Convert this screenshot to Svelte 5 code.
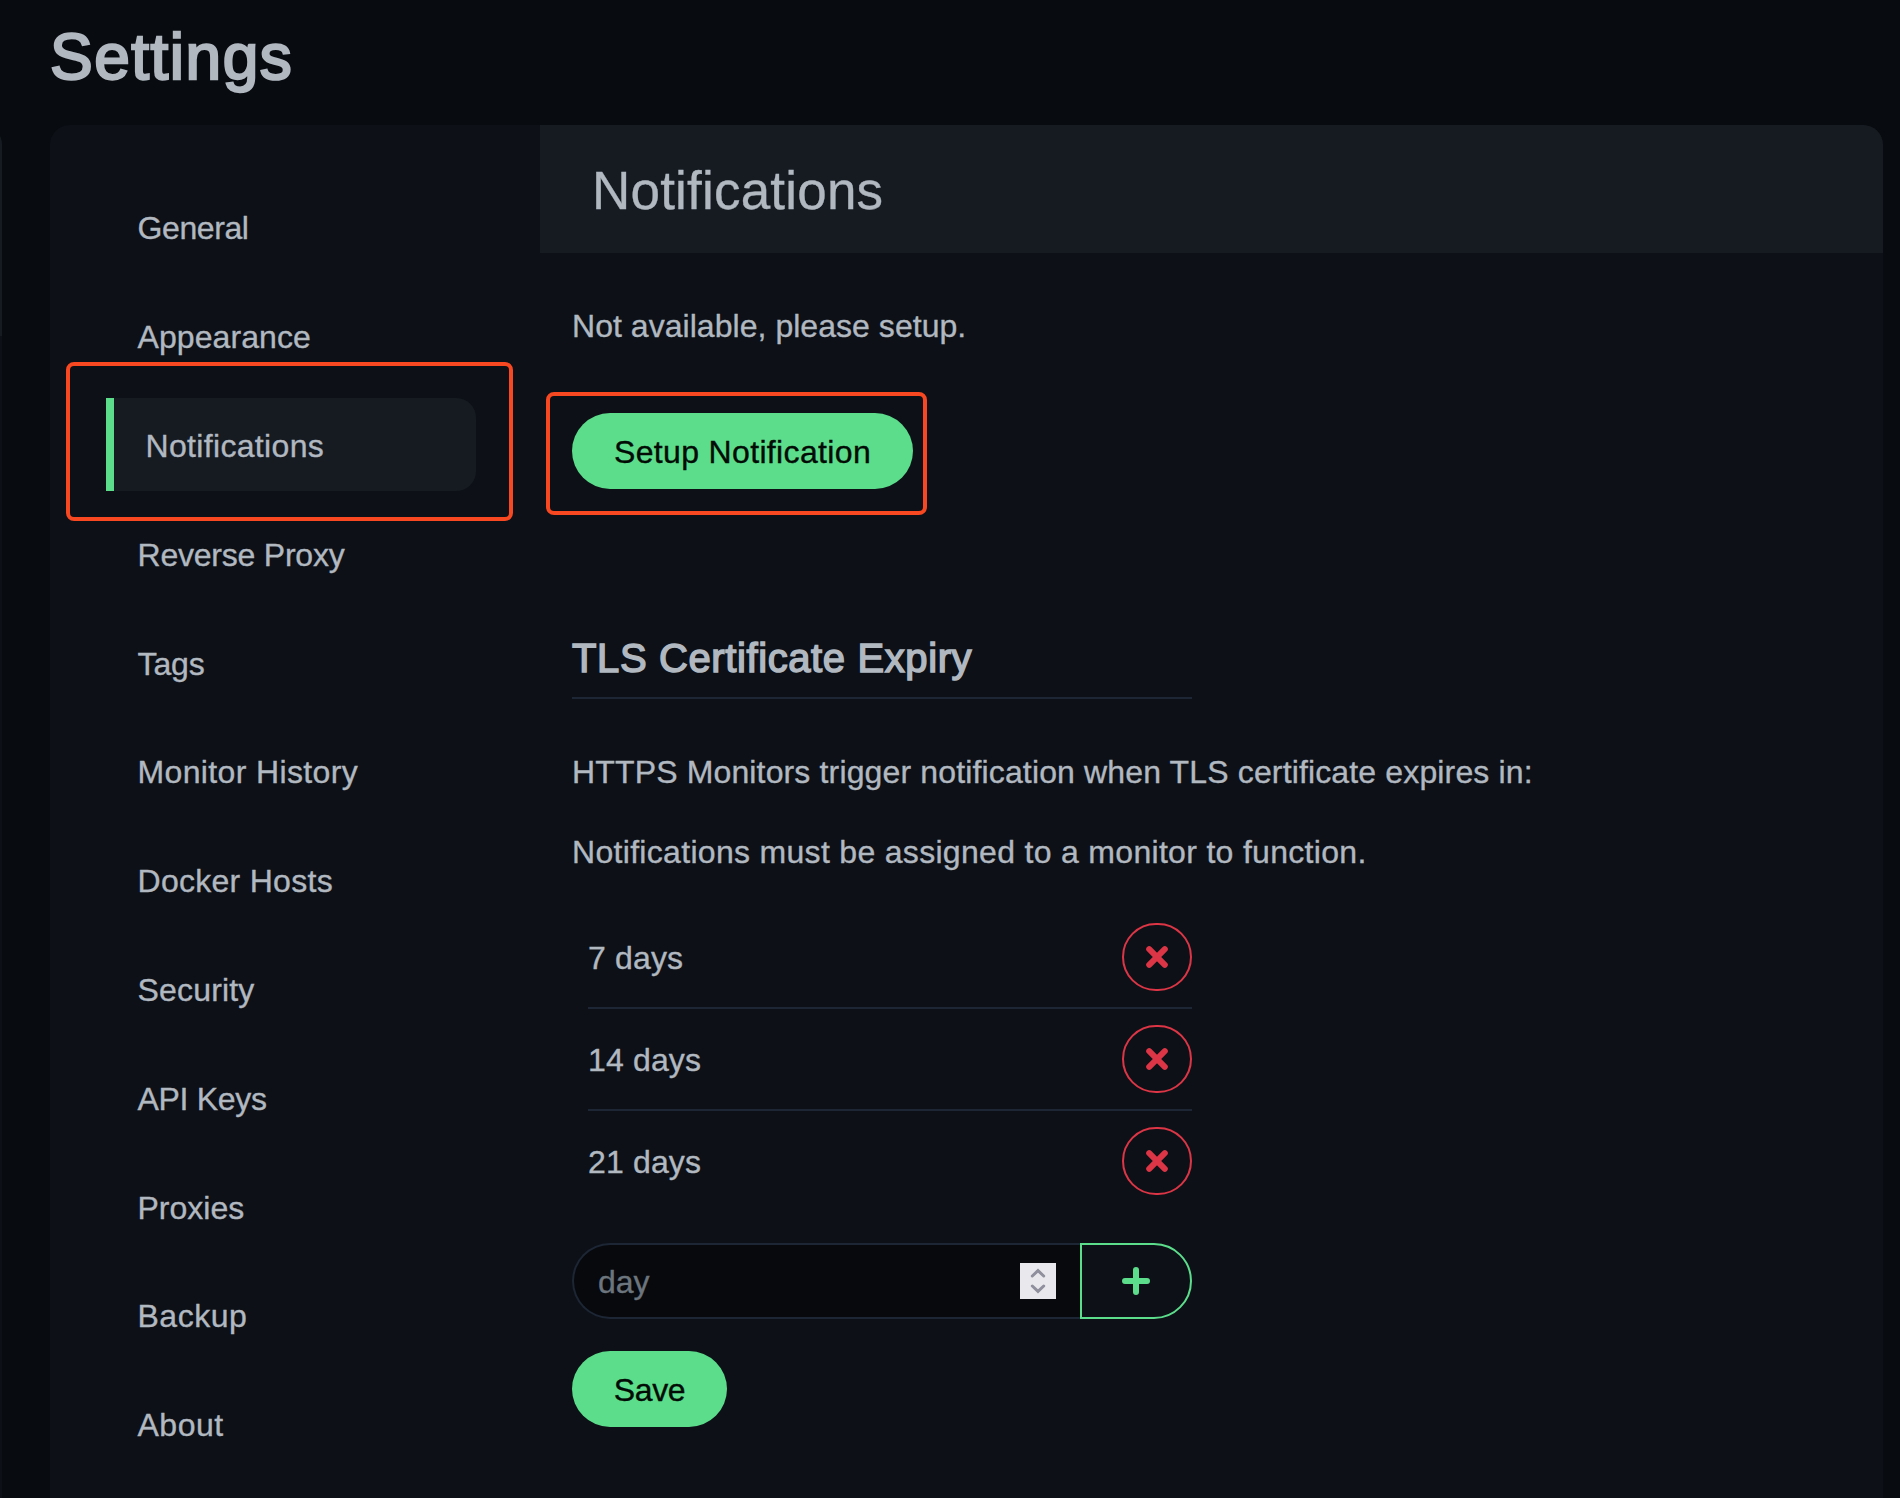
<script>
  // tracking: letter spacing of each label, in px
  const menu = [
    { label: 'General', tracking: -0.4 },
    { label: 'Appearance', tracking: 0.08 },
    { label: 'Notifications', tracking: 0.33 },
    { label: 'Reverse Proxy', tracking: -0.22 },
    { label: 'Tags', tracking: -0.1 },
    { label: 'Monitor History', tracking: 0.36 },
    { label: 'Docker Hosts', tracking: 0.28 },
    { label: 'Security', tracking: 0.18 },
    { label: 'API Keys', tracking: -0.3 },
    { label: 'Proxies', tracking: 0 },
    { label: 'Backup', tracking: 0.5 },
    { label: 'About', tracking: 0.5 }
  ];
  const active = 'Notifications';
  const days = [7, 14, 21];
</script>

<div class="page">
  <div class="edge"></div>
  <h1>Settings</h1>
  <div class="panel">
    <nav>
      {#each menu as item}
        <div class="item" class:active={item.label === active}>
          <span style="letter-spacing: {item.tracking}px">{item.label}</span>
          {#if item.label === active}<i class="mark mark-menu"></i>{/if}
        </div>
      {/each}
    </nav>
    <main>
      <header><span>Notifications</span></header>
      <section>
        <p class="empty"><span>Not available, please setup.</span></p>
        <div class="setup">
          <button class="primary wide"><span>Setup Notification</span></button>
          <i class="mark mark-setup"></i>
        </div>
        <h2><span>TLS Certificate Expiry</span></h2>
        <p class="hint"><span>HTTPS Monitors trigger notification when TLS certificate expires in:</span></p>
        <p class="hint assign"><span>Notifications must be assigned to a monitor to function.</span></p>
        <div class="list">
          {#each days as d}
            <div class="row">
              <span>{d} days</span>
              <button class="remove" aria-label="Remove">
                <svg width="22" height="22" viewBox="0 0 22 22"><path d="M3.2 3.2 18.8 18.8M18.8 3.2 3.2 18.8" /></svg>
              </button>
            </div>
          {/each}
        </div>
        <div class="group">
          <div class="field">
            <span>day</span>
            <div class="spin">
              <svg width="36" height="36" viewBox="0 0 36 36"><path d="M12.3 13 18 7.6 23.7 13M12.3 23 18 28.4 23.7 23" /></svg>
            </div>
          </div>
          <button class="add" aria-label="Add">
            <svg width="28" height="28" viewBox="0 0 28 28"><path d="M14 3V25M3 14H25" /></svg>
          </button>
        </div>
        <button class="primary save"><span>Save</span></button>
      </section>
    </main>
  </div>
</div>

<style>
  :global(body) { background: #080b10; }
  .page {
    position: relative;
    box-sizing: border-box;
    width: 1900px;
    height: 1498px;
    padding: 0 17px 0 50px;
    overflow: hidden;
    background: #080b10;
    color: #b1b8c0;
    font: 32px/48px "Liberation Sans", Arial, sans-serif;
    -webkit-text-stroke: 0.35px currentColor;
  }
  .edge {
    position: absolute;
    left: -38px;
    top: 125px;
    width: 40px;
    height: 1373px;
    border-radius: 20px 20px 0 0;
    background: linear-gradient(#161b22 211px, #0d1117 211px);
  }
  h1 {
    margin: 0;
    height: 125px;
    font-size: 64px;
    line-height: 115px;
    font-weight: 400;
    letter-spacing: 1.5px;
    -webkit-text-stroke: 2.4px #b1b8c0;
  }
  .panel {
    display: grid;
    grid-template-columns: 490px 1fr;
    height: 1373px;
    border-radius: 20px 20px 0 0;
    overflow: hidden;
    background: #0d1117;
  }
  nav {
    display: flex;
    flex-direction: column;
    gap: 16px;
    padding: 55.4px 64px 0 56px;
  }
  .item {
    position: relative;
    box-sizing: border-box;
    height: 92.8px;
    flex: none;
    padding: 24px 0 0 31.5px;
  }
  .active {
    border-left: 8px solid #5cdd8b;
    border-radius: 0 20px 20px 0;
    background: #161b22;
  }
  .mark {
    position: absolute;
    box-sizing: border-box;
    border: 4px solid #f74822;
    border-radius: 8px;
  }
  .mark-menu { left: -48px; top: -36px; width: 447px; height: 159px; }
  .mark-setup { left: -26px; top: -21px; width: 381px; height: 123px; }
  header {
    box-sizing: border-box;
    height: 128px;
    padding-left: 52px;
    background: #161b22;
    font-size: 53px;
    line-height: 131px;
    letter-spacing: 0.2px;
  }
  section { padding: 49px 32px 0; }
  p { margin: 0; height: 48px; }
  .empty { letter-spacing: 0.04px; }
  button {
    display: flex;
    align-items: center;
    justify-content: center;
    box-sizing: border-box;
    margin: 0;
    padding: 0;
    border: 0;
    font: inherit;
    background: none;
  }
  .primary {
    height: 76px;
    padding-top: 2px;
    border-radius: 38px;
    background: #5cdd8b;
    color: #020b05;
  }
  .wide { width: 341px; letter-spacing: 0.35px; }
  .save { width: 155px; margin-top: 32px; padding-top: 1px; letter-spacing: -0.3px; }
  .setup { position: relative; margin-top: 63px; width: 341px; }
  h2 {
    box-sizing: border-box;
    width: 620px;
    height: 70px;
    margin: 140px 0 49px;
    border-bottom: 2px solid #1d2634;
    font-size: 40px;
    line-height: 59px;
    font-weight: 400;
    letter-spacing: 0.61px;
    -webkit-text-stroke: 1.5px #b1b8c0;
    white-space: nowrap;
  }
  .hint { margin-bottom: 32px; letter-spacing: 0.145px; white-space: nowrap; }
  .assign { margin-bottom: 31px; letter-spacing: 0.31px; }
  .list { width: 604px; padding-left: 16px; }
  .row {
    display: flex;
    justify-content: space-between;
    align-items: center;
    box-sizing: border-box;
    height: 102px;
    border-bottom: 2px solid #1d2634;
    letter-spacing: 0.15px;
  }
  .row span { padding-top: 2px; }
  .row:last-child { border-color: transparent; }
  .remove {
    width: 70px;
    height: 68px;
    border: 2px solid #dc3545;
    border-radius: 35px;
  }
  path { fill: none; stroke-linecap: round; }
  .remove path { stroke: #dc3545; stroke-width: 6; }
  .group { display: flex; width: 620px; height: 76px; margin-top: 30px; }
  .field {
    display: flex;
    align-items: center;
    justify-content: space-between;
    box-sizing: border-box;
    width: 508px;
    padding: 0 24px;
    border: 2px solid #1d2634;
    border-right: 0;
    border-radius: 38px 0 0 38px;
    background: #07090d;
    color: #6c757d;
  }
  .field span { padding-top: 2px; }
  .spin { width: 36px; height: 36px; background: #e9e9ed; }
  .spin svg { display: block; }
  .spin path { stroke: #8f8f9d; stroke-width: 3; }
  .add {
    width: 112px;
    border: 2px solid #5cdd8b;
    border-radius: 0 38px 38px 0;
  }
  .add path { stroke: #5cdd8b; stroke-width: 6; }
</style>
